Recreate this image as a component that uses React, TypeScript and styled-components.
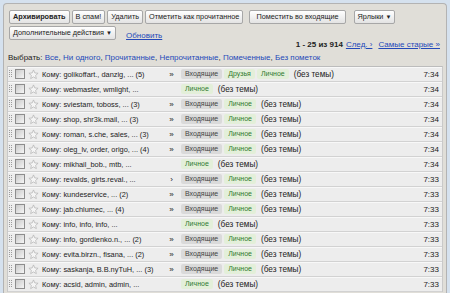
import React from "react";
import styled, { createGlobalStyle } from "styled-components";

const Global = createGlobalStyle`
  html, body { margin: 0; padding: 0; background: #d5e1ee; }
  body {
    font-family: "Liberation Sans", Arial, sans-serif;
    width: 450px; height: 293px; overflow: hidden;
    color: #222;
  }
`;

const Page = styled.div`
  padding: 3px 3px 0 3px;
  height: 293px;
  box-sizing: border-box;
`;

const Panel = styled.div`
  background: #e0ded8;
  border: 1px solid #b3b3b3;
  border-bottom: none;
  border-radius: 4px 4px 0 0;
  padding: 0 3px;
  height: 290px;
  box-sizing: border-box;
  overflow: hidden;
`;

const Toolbar = styled.div`
  padding: 6px 0 0 2px;
  display: flex;
  flex-direction: column;
  gap: 2px;
`;

const BtnRow = styled.div`
  display: flex;
  align-items: center;
  gap: 2px;
`;

const Btn = styled.button<{ $bold?: boolean; $ml?: number; $px?: number }>`
  font-family: inherit;
  font-size: 7.3px;
  font-weight: ${(p) => (p.$bold ? 700 : 400)};
  height: 14px;
  padding: 0 ${(p) => p.$px ?? 3}px;
  margin: 0 0 0 ${(p) => p.$ml ?? 0}px;
  border: 1px solid #a7a7a7;
  border-radius: 2px;
  background: linear-gradient(#ffffff, #e3e3e3);
  color: #222;
  line-height: 12px;
  white-space: nowrap;
  display: inline-flex;
  align-items: center;
  gap: 2px;
`;

const Arrow = styled.span`
  font-size: 6px;
`;

const Link = styled.a<{ $u?: boolean }>`
  color: #2449b9;
  text-decoration: ${(p) => (p.$u ? "underline" : "none")};
  cursor: pointer;
`;

const Refresh = styled(Link)`
  font-size: 8px;
  margin-left: 8px;
  margin-top: 5px;
`;

const Pager = styled.div`
  text-align: right;
  font-size: 8px;
  line-height: 9px;
  padding-right: 3px;
  white-space: nowrap;
`;

const Bold = styled.b`
  font-weight: 700;
  margin-right: 3px;
`;

const Spacer = styled.span`
  display: inline-block;
  width: 6px;
`;

const SelectLine = styled.div`
  font-size: 8px;
  line-height: 12px;
  margin-top: 3px;
  padding-left: 1px;
  white-space: nowrap;
`;

const List = styled.div`
  margin-top: 2px;
  border-top: 1px solid #bcbcbc;
  border-left: 1px solid #c9c9c9;
  border-right: 1px solid #c9c9c9;
`;

const Row = styled.div`
  display: flex;
  align-items: center;
  height: 15px;
  box-sizing: border-box;
  background: #ededed;
  border-bottom: 1px solid #d2d2d2;
  box-shadow: inset 0 1px 0 #f8f8f8;
  font-size: 7.4px;
  white-space: nowrap;
`;

const Handle = styled.svg`
  margin-left: 1px;
  flex: none;
`;

const Check = styled.span`
  flex: none;
  width: 10px;
  height: 10px;
  margin-left: 2px;
  border: 1px solid #8d8d8d;
  background: linear-gradient(135deg, #c9c9c9, #f6f6f6);
  box-sizing: border-box;
`;

const Star = styled.svg`
  flex: none;
  margin-left: 3px;
`;

const Sender = styled.span`
  flex: none;
  width: 122px;
  margin-left: 3px;
  overflow: hidden;
`;

const Marker = styled.span`
  flex: none;
  width: 15px;
  text-align: center;
  font-size: 8px;
`;

const Labels = styled.span`
  display: flex;
  gap: 2px;
  margin-left: 2px;
  flex: none;
`;

const Label = styled.span<{ $kind: "inbox" | "green" }>`
  font-size: 7px;
  height: 10px;
  line-height: 10px;
  padding: 0 4px;
  border-radius: 2px;
  background: ${(p) => (p.$kind === "inbox" ? "#dadada" : "#e3efd9")};
  color: ${(p) => (p.$kind === "inbox" ? "#444" : "#2f7a2f")};
`;

const Subject = styled.span`
  margin-left: 5px;
  font-size: 8.2px;
`;

const Time = styled.span`
  margin-left: auto;
  padding-right: 3px;
  font-size: 8px;
`;

type Mail = {
  to: string;
  mark?: string;
  labels: string[];
  time: string;
};

const mails: Mail[] = [
  { to: "Кому: golikoffart., danzig, ... (5)", mark: "»", labels: ["Входящие", "Друзья", "Личное"], time: "7:34" },
  { to: "Кому: webmaster, wmlight, ...", labels: ["Личное"], time: "7:34" },
  { to: "Кому: sviestam, toboss, ... (3)", mark: "»", labels: ["Входящие", "Личное"], time: "7:34" },
  { to: "Кому: shop, shr3k.mail, ... (3)", mark: "»", labels: ["Входящие", "Личное"], time: "7:34" },
  { to: "Кому: roman, s.che, sales, ... (3)", mark: "»", labels: ["Входящие", "Личное"], time: "7:34" },
  { to: "Кому: oleg_lv, order, origo, ... (4)", mark: "»", labels: ["Входящие", "Личное"], time: "7:34" },
  { to: "Кому: mikhail_bob., mtb, ...", labels: ["Личное"], time: "7:34" },
  { to: "Кому: revalds, girts.reval., ...", mark: "›", labels: ["Входящие", "Личное"], time: "7:33" },
  { to: "Кому: kundeservice, ... (2)", mark: "»", labels: ["Входящие", "Личное"], time: "7:33" },
  { to: "Кому: jab.chlumec, ... (4)", mark: "»", labels: ["Входящие", "Личное"], time: "7:33" },
  { to: "Кому: info, info, info, ...", labels: ["Личное"], time: "7:33" },
  { to: "Кому: info, gordienko.n., ... (2)", mark: "»", labels: ["Входящие", "Личное"], time: "7:33" },
  { to: "Кому: evita.birzn., fisana, ... (2)", mark: "»", labels: ["Входящие", "Личное"], time: "7:33" },
  { to: "Кому: saskanja, B.B.nyTuH, ... (3)", mark: "»", labels: ["Входящие", "Личное"], time: "7:33" },
  { to: "Кому: acsid, admin, admin, ...", labels: ["Личное"], time: "7:33" },
];

const DragDots = () => (
  <Handle width="4" height="8" viewBox="0 0 4 8">
    {[0, 2, 4, 6].map((y) =>
      [0, 2].map((x) => <rect key={`${x}-${y}`} x={x} y={y} width="1" height="1" fill="#9a9a9a" />)
    )}
  </Handle>
);

const StarIcon = () => (
  <Star width="11" height="11" viewBox="0 0 24 24">
    <polygon
      points="12,2 14.9,8.6 22,9.3 16.6,14 18.2,21 12,17.3 5.8,21 7.4,14 2,9.3 9.1,8.6"
      fill="#f5f5f5"
      stroke="#b4b4b4"
      strokeWidth="1.6"
      strokeLinejoin="round"
    />
  </Star>
);

export default function App() {
  return (
    <>
      <Global />
      <Page>
        <Panel>
          <Toolbar>
            <BtnRow>
              <Btn $bold>Архивировать</Btn>
              <Btn>В спам!</Btn>
              <Btn>Удалить</Btn>
              <Btn>Отметить как прочитанное</Btn>
              <Btn $ml={4} $px={6}>Поместить во входящие</Btn>
              <Btn $ml={6}>
                Ярлыки <Arrow>▼</Arrow>
              </Btn>
            </BtnRow>
            <BtnRow>
              <Btn>
                Дополнительные действия <Arrow>▼</Arrow>
              </Btn>
              <Refresh $u>Обновить</Refresh>
            </BtnRow>
          </Toolbar>
          <Pager>
            <Bold>1 - 25 из 914</Bold>
            <Link $u>След. ›</Link>
            <Spacer />
            <Link $u>Самые старые »</Link>
          </Pager>
          <SelectLine>
            Выбрать: <Link>Все</Link>, <Link>Ни одного</Link>, <Link>Прочитанные</Link>,{" "}
            <Link>Непрочитанные</Link>, <Link>Помеченные</Link>, <Link>Без пометок</Link>
          </SelectLine>
          <List>
            {mails.map((m, i) => (
              <Row key={i}>
                <DragDots />
                <Check />
                <StarIcon />
                <Sender>{m.to}</Sender>
                <Marker>{m.mark ?? ""}</Marker>
                <Labels>
                  {m.labels.map((l) => (
                    <Label key={l} $kind={l === "Входящие" ? "inbox" : "green"}>
                      {l}
                    </Label>
                  ))}
                </Labels>
                <Subject>(без темы)</Subject>
                <Time>{m.time}</Time>
              </Row>
            ))}
          </List>
        </Panel>
      </Page>
    </>
  );
}
